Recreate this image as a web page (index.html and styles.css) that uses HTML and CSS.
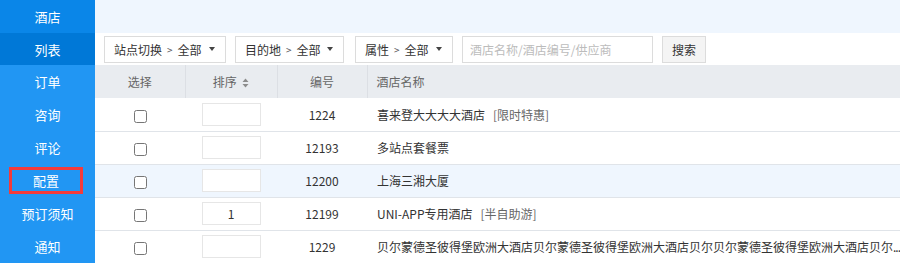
FILE: index.html
```html
<!DOCTYPE html>
<html lang="zh-CN">
<head>
<meta charset="utf-8">
<title>酒店列表</title>
<link rel="stylesheet" href="styles.css">
</head>
<body>
<div class="app">
  <nav class="sidebar">
    <div class="nav-item nav-head">酒店</div>
    <div class="nav-item nav-active">列表</div>
    <div class="nav-item">订单</div>
    <div class="nav-item">咨询</div>
    <div class="nav-item">评论</div>
    <div class="nav-item"><span class="nav-marked">配置</span></div>
    <div class="nav-item">预订须知</div>
    <div class="nav-item">通知</div>
  </nav>
  <main class="main">
    <div class="topbar"></div>
    <div class="filters">
      <div class="dropdown dd-site">站点切换<span class="gt">&gt;</span>全部<span class="caret"></span></div>
      <div class="dropdown dd-dest">目的地<span class="gt">&gt;</span>全部<span class="caret"></span></div>
      <div class="dropdown dd-attr">属性<span class="gt">&gt;</span>全部<span class="caret"></span></div>
      <input class="search-input" type="text" placeholder="酒店名称/酒店编号/供应商">
      <button class="search-btn" type="button">搜索</button>
    </div>
    <table class="grid">
      <colgroup>
        <col class="c-sel"><col class="c-sort"><col class="c-id"><col>
      </colgroup>
      <thead>
        <tr>
          <th>选择</th>
          <th>排序 <svg class="sort-ico" width="7" height="10" viewBox="0 0 7 10"><path d="M3.5 0.5 L6.5 4 L0.5 4 Z M3.5 9.5 L6.5 6 L0.5 6 Z" fill="#8c8c8c"/></svg></th>
          <th>编号</th>
          <th class="th-name">酒店名称</th>
        </tr>
      </thead>
      <tbody>
        <tr>
          <td><input type="checkbox"></td>
          <td><input class="sort-box" type="text" value=""></td>
          <td>1224</td>
          <td class="name">喜来登大大大大酒店<span class="tag">[限时特惠]</span></td>
        </tr>
        <tr>
          <td><input type="checkbox"></td>
          <td><input class="sort-box" type="text" value=""></td>
          <td>12193</td>
          <td class="name">多站点套餐票</td>
        </tr>
        <tr class="hover">
          <td><input type="checkbox"></td>
          <td><input class="sort-box" type="text" value=""></td>
          <td>12200</td>
          <td class="name">上海三湘大厦</td>
        </tr>
        <tr>
          <td><input type="checkbox"></td>
          <td><input class="sort-box" type="text" value="1"></td>
          <td>12199</td>
          <td class="name">UNI-APP专用酒店<span class="tag">[半自助游]</span></td>
        </tr>
        <tr>
          <td><input type="checkbox"></td>
          <td><input class="sort-box" type="text" value=""></td>
          <td>1229</td>
          <td class="name">贝尔蒙德圣彼得堡欧洲大酒店贝尔蒙德圣彼得堡欧洲大酒店贝尔贝尔蒙德圣彼得堡欧洲大酒店贝尔<span class="more">...</span></td>
        </tr>
      </tbody>
    </table>
  </main>
</div>
</body>
</html>
```
FILE: styles.css
```css
* { box-sizing: border-box; }
html, body { margin: 0; padding: 0; }
body {
  font-family: "Noto Sans CJK SC", "Noto Sans", "Liberation Sans", sans-serif;
  font-size: 12px;
  color: #333;
  background: #fff;
  overflow: hidden;
}
.app { display: flex; height: 263px; }
.sidebar {
  width: 95px;
  flex: none;
  background: #2196f3;
  color: #fff;
}
.nav-item {
  height: 33px;
  display: flex;
  align-items: center;
  justify-content: center;
  font-size: 13px;
}
.nav-head { background: #0a86e8; }
.nav-active { background: #0078d7; height: 32px; }
.nav-marked {
  width: 74px;
  height: 27px;
  border: 3px solid #f23b3b;
  display: flex;
  align-items: center;
  justify-content: center;
  margin-right: 3px;
}
.main { flex: 1; min-width: 0; display: flex; flex-direction: column; }
.topbar { height: 33px; background: #eff6fe; flex: none; }
.filters {
  height: 32px;
  flex: none;
  display: flex;
  align-items: center;
  padding-left: 9px;
  gap: 9px;
}
.dropdown {
  height: 27px;
  border: 1px solid #dcdcdc;
  display: flex;
  align-items: center;
  padding: 0 10px 0 9px;
  color: #333;
  white-space: nowrap;
}
.dd-site { width: 122px; }
.dd-dest { width: 109px; }
.dd-attr { width: 98px; margin-left: 2px; }
.gt { font-size: 10px; color: #555; margin: 0 5px 0 5px; }
.caret {
  margin-left: auto;
  width: 0; height: 0;
  border-left: 3px solid transparent;
  border-right: 3px solid transparent;
  border-top: 4px solid #444;
}
.search-input {
  width: 191px;
  height: 27px;
  border: 1px solid #dcdcdc;
  padding: 0 7px;
  font: inherit;
  color: #333;
  outline: none;
}
.search-input::placeholder { color: #bcbcbc; }
.search-btn {
  width: 44px;
  height: 27px;
  border: 1px solid #dcdcdc;
  background: #f4f4f4;
  font: inherit;
  color: #333;
  padding: 0;
}
.grid {
  width: 100%;
  border-collapse: collapse;
  table-layout: fixed;
}
.c-sel { width: 90px; }
.c-sort { width: 92px; }
.c-id { width: 90px; }
.grid th {
  height: 33px;
  background: #e9ecf0;
  color: #666;
  font-weight: normal;
  text-align: center;
  border-left: 1px solid #dcdfe4;
  padding: 0;
}
.grid th:first-child { border-left: none; }
.grid th.th-name { text-align: left; padding-left: 9px; }
.sort-ico { vertical-align: -1px; margin-left: 3px; }
.grid td {
  height: 33px;
  text-align: center;
  border-bottom: 1px solid #e0e4e9;
  padding: 0;
  color: #333;
}
.grid tr.hover td { background: #eff6fe; }
.grid td input[type="checkbox"] { margin: 0; vertical-align: middle; }
.sort-box {
  width: 59px;
  height: 23px;
  border: 1px solid #e6e6e6;
  text-align: center;
  font: inherit;
  color: #333;
  outline: none;
  padding: 0;
  vertical-align: middle;
}
.grid td.name {
  text-align: left;
  padding-left: 10px;
  white-space: nowrap;
  overflow: hidden;
}
.more { letter-spacing: -1px; }
.tag { color: #666; margin-left: 8px; }
```
